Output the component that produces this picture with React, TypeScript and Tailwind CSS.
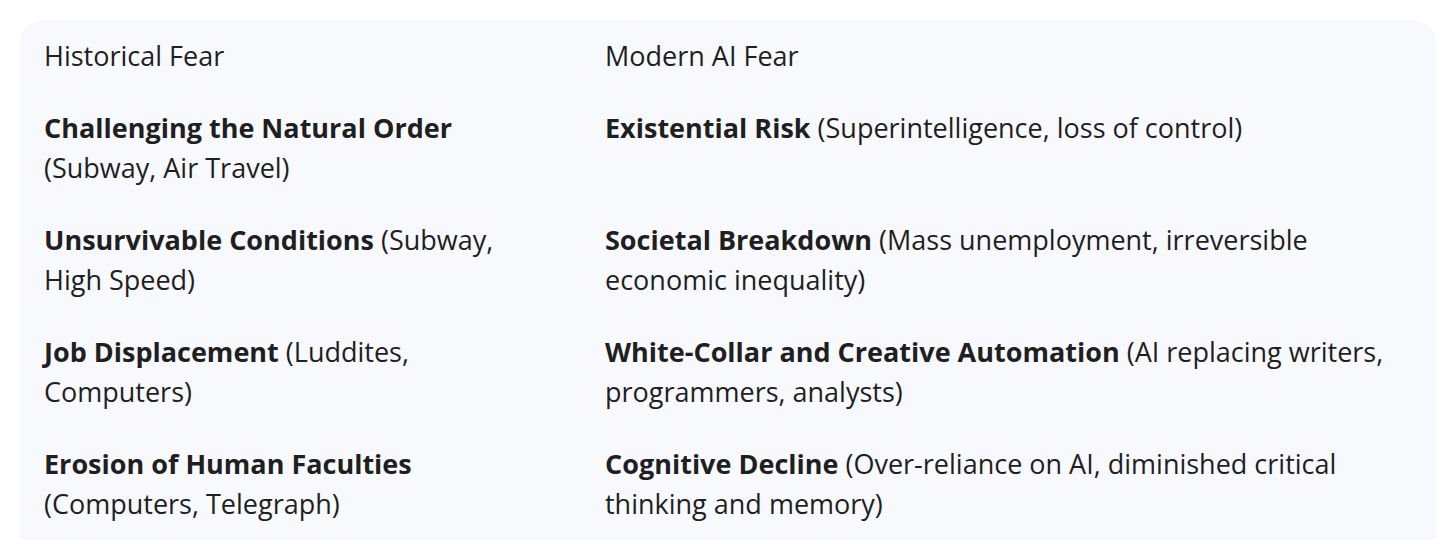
import React from "react";

type Row = {
  histTitle: string;
  histNote: string;
  modTitle: string;
  modNote: string;
};

const rows: Row[] = [
  {
    histTitle: "Challenging the Natural Order",
    histNote: "(Subway, Air Travel)",
    modTitle: "Existential Risk",
    modNote: "(Superintelligence, loss of control)",
  },
  {
    histTitle: "Unsurvivable Conditions",
    histNote: "(Subway, High Speed)",
    modTitle: "Societal Breakdown",
    modNote: "(Mass unemployment, irreversible economic inequality)",
  },
  {
    histTitle: "Job Displacement",
    histNote: "(Luddites, Computers)",
    modTitle: "White-Collar and Creative Automation",
    modNote: "(AI replacing writers, programmers, analysts)",
  },
  {
    histTitle: "Erosion of Human Faculties",
    histNote: "(Computers, Telegraph)",
    modTitle: "Cognitive Decline",
    modNote: "(Over-reliance on AI, diminished critical thinking and memory)",
  },
];

const App: React.FC = () => {
  return (
    <div className="bg-white min-h-screen pt-5 pl-5 pr-[10px] text-[#1f1f1f] font-['Open_Sans',sans-serif] text-[27px] leading-[40px]">
      {/* Table card */}
      <div className="bg-[#f8f9fd] rounded-t-[22px] rounded-b-[6px] grid grid-cols-[561px_1fr]">
        <div className="pl-6 pr-8 py-4">Historical Fear</div>
        <div className="px-6 py-4">Modern AI Fear</div>

        {rows.map((r) => (
          <React.Fragment key={r.histTitle}>
            <div className="pl-6 pr-8 py-4">
              <span className="font-bold">{r.histTitle}</span> {r.histNote}
            </div>
            <div className="px-6 py-4">
              <span className="font-bold">{r.modTitle}</span> {r.modNote}
            </div>
          </React.Fragment>
        ))}
      </div>
    </div>
  );
};

export default App;
